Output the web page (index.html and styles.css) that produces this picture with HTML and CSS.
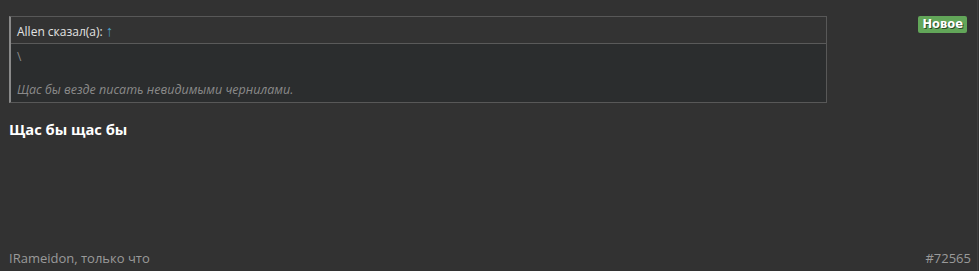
FILE: index.html
```html
<!DOCTYPE html>
<html lang="ru">
<head>
<meta charset="utf-8">
<link rel="stylesheet" href="styles.css">
</head>
<body>
<div class="post">
  <div class="post-top">
    <div class="post-main">
      <blockquote class="quote">
        <div class="quote-head">Allen сказал(а): <span class="quote-arrow">↑</span></div>
        <div class="quote-body">
          <div class="quote-line">\</div>
          <div class="quote-text">Щас бы везде писать невидимыми чернилами.</div>
        </div>
      </blockquote>
      <div class="post-text">Щас бы щас бы</div>
    </div>
    <span class="badge">Новое</span>
  </div>
  <div class="post-foot">
    <span class="author">IRameidon, только что</span>
    <span class="post-id">#72565</span>
  </div>
</div>
</body>
</html>
```
FILE: styles.css
```css
html, body {
  margin: 0;
  padding: 0;
  background: #323232;
}
body {
  font-family: "Open Sans", "Noto Sans", sans-serif;
  color: #e6e6e6;
}
.post {
  height: 271px;
  box-sizing: border-box;
  display: flex;
  flex-direction: column;
  justify-content: space-between;
  padding: 16px 6px 0 9px;
  border-right: 1px solid #3e3e3e;
  margin-right: 1px;
}
.post-top {
  display: flex;
  align-items: flex-start;
}
.post-main {
  width: 818px;
}
.quote {
  margin: 0;
  border: 1px solid #585858;
  border-left: 2px solid #8a8a8a;
}
.quote-head {
  height: 26px;
  line-height: 26px;
  padding-left: 6px;
  font-size: 12px;
  color: #e2e2e2;
  background: #333333;
  border-bottom: 1px solid #5a5a5a;
}
.quote-arrow {
  color: #4a9cc2;
  font-size: 15px;
  font-weight: 700;
}
.quote-body {
  background: #2b2d2e;
  padding: 4px 6px 4px 6px;
  font-size: 12px;
  color: #8a8a8a;
}
.quote-line {
  line-height: 17px;
  height: 17px;
}
.quote-text {
  margin-top: 16px;
  line-height: 17px;
  font-size: 12.5px;
  font-style: italic;
}
.post-text {
  margin-top: 16px;
  font-size: 14.7px;
  font-weight: 700;
  color: #ffffff;
  line-height: 20px;
}
.badge {
  margin-left: auto;
  margin-right: 4px;
  background: #62a659;
  color: #ffffff;
  font-family: "DejaVu Sans", Verdana, sans-serif;
  font-weight: 700;
  font-size: 11.5px;
  line-height: 17px;
  height: 17px;
  padding: 0 4px;
  border-radius: 2px;
  text-shadow: 1px 1px 0 #2a4a26;
}
.post-foot {
  display: flex;
  justify-content: space-between;
  font-size: 13px;
  color: #9a9a9a;
  line-height: 18px;
  padding-bottom: 4px;
}
```
